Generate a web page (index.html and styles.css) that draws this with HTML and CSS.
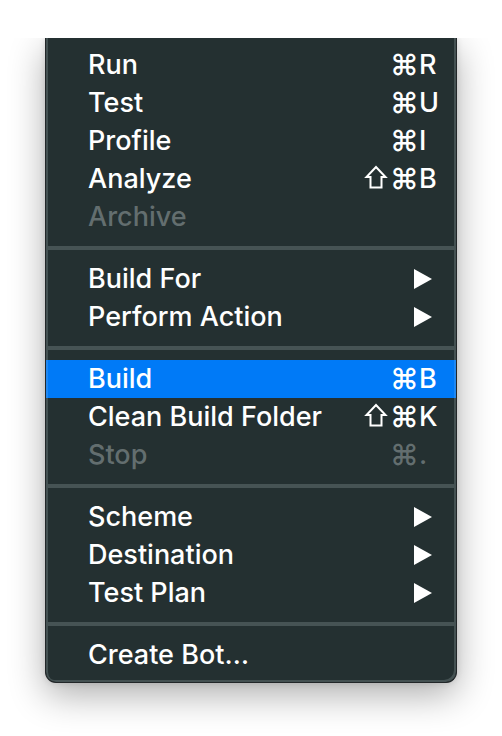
FILE: index.html
```html
<!DOCTYPE html>
<html lang="en">
<head>
<meta charset="utf-8">
<title>Product menu</title>
<meta name="viewport" content="width=device-width, initial-scale=1">
<link rel="stylesheet" href="styles.css">
</head>
<body>
<main class="stage">
  <div class="menu" role="menu" aria-label="Product">
    <button class="item" role="menuitem"><span class="label">Run</span><span class="keys"><span class="mod">⌘</span><span class="key">R</span></span></button>
    <button class="item" role="menuitem"><span class="label">Test</span><span class="keys"><span class="mod">⌘</span><span class="key">U</span></span></button>
    <button class="item" role="menuitem"><span class="label">Profile</span><span class="keys"><span class="mod">⌘</span><span class="key">I</span></span></button>
    <button class="item" role="menuitem"><span class="label">Analyze</span><span class="keys"><svg class="shift" viewBox="0 0 24 24" role="img" aria-label="Shift"><path d="M12 2 21.5 12H17.5V22.5H6.5V12H2.5Z"/></svg><span class="mod">⌘</span><span class="key">B</span></span></button>
    <button class="item" role="menuitem" disabled><span class="label">Archive</span></button>
    <hr class="separator">
    <button class="item" role="menuitem" aria-haspopup="menu"><span class="label">Build For</span><svg class="arrow" viewBox="0 0 18 20" aria-hidden="true"><path d="M0 0 18 10 0 20Z"/></svg></button>
    <button class="item" role="menuitem" aria-haspopup="menu"><span class="label">Perform Action</span><svg class="arrow" viewBox="0 0 18 20" aria-hidden="true"><path d="M0 0 18 10 0 20Z"/></svg></button>
    <hr class="separator">
    <button class="item selected" role="menuitem"><span class="label">Build</span><span class="keys"><span class="mod">⌘</span><span class="key">B</span></span></button>
    <button class="item" role="menuitem"><span class="label">Clean Build Folder</span><span class="keys"><svg class="shift" viewBox="0 0 24 24" role="img" aria-label="Shift"><path d="M12 2 21.5 12H17.5V22.5H6.5V12H2.5Z"/></svg><span class="mod">⌘</span><span class="key">K</span></span></button>
    <button class="item" role="menuitem" disabled><span class="label">Stop</span><span class="keys"><span class="mod">⌘</span><span class="key">.</span></span></button>
    <hr class="separator">
    <button class="item" role="menuitem" aria-haspopup="menu"><span class="label">Scheme</span><svg class="arrow" viewBox="0 0 18 20" aria-hidden="true"><path d="M0 0 18 10 0 20Z"/></svg></button>
    <button class="item" role="menuitem" aria-haspopup="menu"><span class="label">Destination</span><svg class="arrow" viewBox="0 0 18 20" aria-hidden="true"><path d="M0 0 18 10 0 20Z"/></svg></button>
    <button class="item" role="menuitem" aria-haspopup="menu"><span class="label">Test Plan</span><svg class="arrow" viewBox="0 0 18 20" aria-hidden="true"><path d="M0 0 18 10 0 20Z"/></svg></button>
    <hr class="separator">
    <button class="item" role="menuitem"><span class="label">Create Bot…</span></button>
  </div>
</main>
</body>
</html>
```
FILE: styles.css
```css
* {
  box-sizing: border-box;
}

body {
  margin: 0;
  background: #fff;
  font-family: Inter, "Liberation Sans", sans-serif;
}

.stage {
  margin-top: 38px;
  padding: 0 45px 53px;
  overflow: hidden;
}

.menu {
  display: flex;
  flex-direction: column;
  padding: 8px 0;
  border: 1px solid #222729;
  border-top: 0;
  border-radius: 0 0 11px 11px;
  background: #243031;
  box-shadow:
    inset 2px 0 #445152,
    inset -2px -2px #445152,
    0 12px 36px rgba(0, 0, 0, 0.32),
    0 0 6px rgba(0, 0, 0, 0.12);
}

.item {
  display: flex;
  align-items: center;
  justify-content: space-between;
  height: 38px;
  margin: 0;
  padding: 0 16px 0 42px;
  border: 0;
  background: none;
  color: #fff;
  font: inherit;
  font-size: 27px;
  font-weight: 450;
  line-height: 38px;
  text-align: left;
  white-space: nowrap;
}

.item:disabled {
  color: #636e6f;
}

.selected {
  background: #007af7;
  box-shadow: inset 2px 0 #2088f2, inset -2px 0 #2088f2;
}

.separator {
  width: 100%;
  height: 4px;
  margin: 10px 0;
  border: 0;
  background: #465354;
}

.keys {
  display: flex;
  align-items: center;
}

.mod {
  width: 29px;
  font-size: 29px;
  font-weight: 500;
}

.key {
  width: 21px;
}

.shift {
  width: 24px;
  height: 24px;
  margin: 0 2px 4px 0;
  fill: none;
  stroke: currentColor;
  stroke-width: 2;
}

.arrow {
  width: 18px;
  height: 20px;
  margin-right: 8px;
  fill: currentColor;
}
```
